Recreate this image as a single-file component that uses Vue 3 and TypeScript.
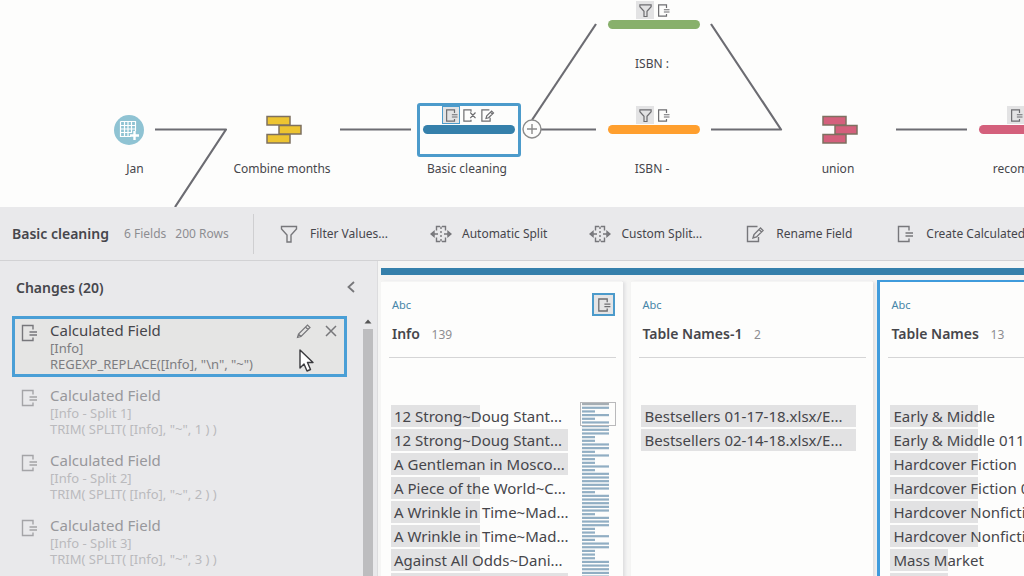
<script setup lang="ts">
import { ref } from 'vue'

type IconName = 'filter' | 'calc' | 'remove' | 'rename' | 'split'
type NodeKind = 'input' | 'union' | 'step'

interface FlowNode {
  id: string
  label: string
  x: number
  y: number
  kind: NodeKind
  color: string
  icons: { name: IconName; shaded: boolean }[]
}

interface Change {
  field: string
  formula: string
}

interface FieldColumn {
  name: string
  count: number
  map: boolean
  values: { text: string; share: number }[]
}

const glyphs: Record<IconName, string> = {
  filter: 'M2.5 2.5H17.5V5L12 11V18H8V11L2.5 5Z',
  calc: 'M14 6.5V2.5H3.5V17.5H14V14.5M10.5 9H18M10.5 12H18',
  remove: 'M12 5V2.5H2.5V17.5H12V15.5M11 6L18 13.5M18 6L11 13.5',
  rename: 'M12.5 2.5H2.5V17.5H13.5V13M8 14L9 10.5L15.5 4L18 6.5L11.5 13ZM14 5.5L16.5 8',
  split: 'M5.500 6.5V2.5H9M11 2.5H14.500V6.5M5.500 13.5V17.5H9M11 17.5H14.500V13.5M10 2.5V5M10 7V9M10 11V13M10 15V17.5M0 10H7M3 7.5L0 10L3 12.5ZM20 10H13M17 7.5L20 10L17 12.5Z',
}

const nodes: FlowNode[] = [
  { id: 'jan', label: 'Jan', x: 137, y: 130, kind: 'input', color: '#8fc3d3', icons: [] },
  { id: 'combine', label: 'Combine months', x: 284, y: 130, kind: 'union', color: '#edc431', icons: [] },
  {
    id: 'clean', label: 'Basic cleaning', x: 469, y: 130, kind: 'step', color: '#3580ab',
    icons: [{ name: 'calc', shaded: true }, { name: 'remove', shaded: false }, { name: 'rename', shaded: false }],
  },
  {
    id: 'isbn-colon', label: 'ISBN :', x: 654, y: 25, kind: 'step', color: '#88b06b',
    icons: [{ name: 'filter', shaded: true }, { name: 'calc', shaded: false }],
  },
  {
    id: 'isbn-dash', label: 'ISBN -', x: 654, y: 130, kind: 'step', color: '#ff9f2e',
    icons: [{ name: 'filter', shaded: true }, { name: 'calc', shaded: false }],
  },
  { id: 'union', label: 'union', x: 840, y: 130, kind: 'union', color: '#d4607c', icons: [] },
  {
    id: 'recombine', label: 'recombine', x: 1025, y: 130, kind: 'step', color: '#d4607c',
    icons: [{ name: 'calc', shaded: true }, { name: 'remove', shaded: false }],
  },
]

const selectedNode = ref('clean')
const selectedChange = ref(0)

const tools: { icon: IconName; label: string }[] = [
  { icon: 'filter', label: 'Filter Values...' },
  { icon: 'split', label: 'Automatic Split' },
  { icon: 'split', label: 'Custom Split...' },
  { icon: 'rename', label: 'Rename Field' },
  { icon: 'calc', label: 'Create Calculated Field...' },
]

const changes: Change[] = [
  { field: '[Info]', formula: 'REGEXP_REPLACE([Info], "\\n", "~")' },
  { field: '[Info - Split 1]', formula: 'TRIM( SPLIT( [Info], "~", 1 ) )' },
  { field: '[Info - Split 2]', formula: 'TRIM( SPLIT( [Info], "~", 2 ) )' },
  { field: '[Info - Split 3]', formula: 'TRIM( SPLIT( [Info], "~", 3 ) )' },
]

const columns: FieldColumn[] = [
  {
    name: 'Info', count: 139, map: true,
    values: [
      { text: '12 Strong~Doug Stant...', share: 50 },
      { text: '12 Strong~Doug Stant...', share: 100 },
      { text: 'A Gentleman in Mosco...', share: 100 },
      { text: 'A Piece of the World~C...', share: 50 },
      { text: 'A Wrinkle in Time~Mad...', share: 50 },
      { text: 'A Wrinkle in Time~Mad...', share: 50 },
      { text: 'Against All Odds~Dani...', share: 50 },
      { text: '', share: 100 },
    ],
  },
  {
    name: 'Table Names-1', count: 2, map: false,
    values: [
      { text: 'Bestsellers 01-17-18.xlsx/E...', share: 100 },
      { text: 'Bestsellers 02-14-18.xlsx/E...', share: 100 },
    ],
  },
  {
    name: 'Table Names', count: 13, map: false,
    values: [
      { text: 'Early & Middle', share: 41 },
      { text: 'Early & Middle 0117', share: 41 },
      { text: 'Hardcover Fiction', share: 41 },
      { text: 'Hardcover Fiction 0117', share: 41 },
      { text: 'Hardcover Nonfiction', share: 41 },
      { text: 'Hardcover Nonfiction 0117', share: 41 },
      { text: 'Mass Market', share: 27 },
      { text: '', share: 27 },
    ],
  },
]
const selectedColumn = ref('Table Names')

const summary = 'FFHFHFFFFHHFFHFHHFHFFFFFHFFFFFHFFFHHFHFFHHHFFFFFFFF'.split('')
</script>

<template>
  <div class="app">
    <section class="canvas" aria-label="Flow">
      <svg class="links" width="1024" height="207" fill="none" stroke="#6c6c72" stroke-width="2.2" stroke-linejoin="round">
        <path d="M155 129.500H226L175 207" />
        <path d="M340 129.500H411" />
        <path d="M532 120L596 24" />
        <path d="M540 129.500H596" />
        <path d="M711 24L781 129.500H711" />
        <path d="M896 129.500H967" />
      </svg>
      <button
        v-for="n in nodes"
        :key="n.id"
        type="button"
        class="node"
        :style="{ left: n.x + 'px', top: n.y + 'px' }"
        @click="selectedNode = n.id"
      >
        <span class="node-box" :class="[n.kind, { selected: selectedNode === n.id }]">
          <template v-if="n.kind === 'step'">
            <span class="badges">
              <span v-for="b in n.icons" :key="b.name" class="badge" :class="{ shaded: b.shaded }">
                <svg width="15" height="15" viewBox="0 0 20 20" fill="none" stroke="currentColor" stroke-width="1.6"><path :d="glyphs[b.name]" /></svg>
              </span>
            </span>
            <span class="bar" :style="{ background: n.color }"></span>
          </template>
          <svg v-else-if="n.kind === 'input'" width="32" height="32" viewBox="0 0 32 32">
            <circle cx="16" cy="16" r="15" :fill="n.color" />
            <path d="M7.500 7.500H22.500V17M18 22.500H7.500V7.500M7.500 11.500H22.500M7.500 15H22.500M7.500 18.500H19M11.500 7.500V22.500M15 7.500V22.500M18.500 7.500V19" fill="none" stroke="#fff" stroke-width="1.2" />
            <path d="M21.500 17V26M17 21.500H26" stroke="#fff" stroke-width="2.4" />
          </svg>
          <svg v-else width="36" height="30" viewBox="0 0 36 30" :fill="n.color" stroke="#7d7060" stroke-width="1.5">
            <path d="M1 1.500H24V10H1ZM1 19.500H24V28H1ZM13 10.500H35V19H13Z" />
          </svg>
        </span>
        <span class="node-label">{{ n.label }}</span>
      </button>
      <button type="button" class="add" aria-label="Add step">
        <svg width="20" height="20" viewBox="0 0 20 20" fill="#fdfdfc" stroke="#8b8b8b" stroke-width="1.4">
          <circle cx="10" cy="10" r="9" /><path d="M10 5V15M5 10H15" />
        </svg>
      </button>
    </section>

    <header class="toolbar">
      <h1>Basic cleaning</h1>
      <p class="counts"><span>6 Fields</span><span>200 Rows</span></p>
      <nav class="tools" aria-label="Field tools">
        <button v-for="t in tools" :key="t.label" type="button" class="tool">
          <svg width="22" height="20" viewBox="-1 0 22 20" fill="none" stroke="currentColor" stroke-width="1.400"><path :d="glyphs[t.icon]" /></svg>
          <span>{{ t.label }}</span>
        </button>
      </nav>
    </header>

    <main class="work">
      <aside class="changes">
        <div class="changes-head">
          <h2>Changes (20)</h2>
          <button type="button" class="icon-button" aria-label="Collapse changes">
            <svg width="12" height="14" viewBox="0 0 12 14" fill="none" stroke="#77777a" stroke-width="1.8"><path d="M9 2L3.500 7L9 12" /></svg>
          </button>
        </div>
        <div class="changes-body">
          <ol class="change-list">
            <li
              v-for="(c, i) in changes"
              :key="c.field"
              class="change"
              :class="{ active: selectedChange === i }"
              @click="selectedChange = i"
            >
              <svg class="change-icon" width="20" height="20" viewBox="0 0 20 20" fill="none" stroke="currentColor" stroke-width="1.400"><path :d="glyphs.calc" /></svg>
              <div class="change-text">
                <h3>Calculated Field</h3>
                <p>{{ c.field }}</p>
                <p>{{ c.formula }}</p>
              </div>
              <div v-if="selectedChange === i" class="change-actions">
                <button type="button" class="icon-button" aria-label="Edit">
                  <svg width="16" height="16" viewBox="0 0 16 16" fill="none" stroke="#77777a" stroke-width="1.2"><path d="M1.500 14.500L2.500 11L11.500 2L14 4.500L5 13.500ZM9.500 4L12 6.500M2.500 11L5 13.500" /></svg>
                </button>
                <button type="button" class="icon-button" aria-label="Remove">
                  <svg width="12" height="12" viewBox="0 0 12 12" fill="none" stroke="#77777a" stroke-width="1.500"><path d="M1 1L11 11M11 1L1 11" /></svg>
                </button>
              </div>
            </li>
          </ol>
          <div class="scroll" aria-hidden="true">
            <svg width="10" height="16" viewBox="0 0 10 16"><path d="M1.500 10.500L5 6.500L8.500 10.500Z" fill="#555" /></svg>
            <span class="thumb"></span>
          </div>
        </div>
      </aside>

      <section class="profile" aria-label="Profile">
        <div class="strip"></div>
        <div class="columns">
          <article
            v-for="c in columns"
            :key="c.name"
            class="column"
            :class="{ current: selectedColumn === c.name }"
            @click="selectedColumn = c.name"
          >
            <div class="column-top">
              <span class="type">Abc</span>
              <span v-if="c.map" class="calc-mark">
                <svg width="16" height="16" viewBox="0 0 20 20" fill="none" stroke="currentColor" stroke-width="1.600"><path :d="glyphs.calc" /></svg>
              </span>
            </div>
            <h2 class="column-name">{{ c.name }} <span>{{ c.count }}</span></h2>
            <div class="column-body">
              <ul class="values">
                <li v-for="(v, i) in c.values" :key="i">
                  <span class="fill" :style="{ width: v.share + '%' }"></span>
                  <span class="value">{{ v.text }}</span>
                </li>
              </ul>
              <svg v-if="c.map" class="map" width="36" height="190" viewBox="0 0 36 190">
                <rect
                  v-for="(s, i) in summary"
                  :key="i"
                  x="2"
                  :y="1 + i * 3.67"
                  :width="s === 'F' ? 27 : 13"
                  height="2.2"
                  :fill="i === 0 ? '#a5adb3' : '#91aec3'"
                />
                <rect x="0.500" y="0.500" width="35" height="23" fill="none" stroke="#b9b9bb" />
              </svg>
            </div>
          </article>
        </div>
      </section>
    </main>

    <svg class="pointer" width="18" height="26" viewBox="0 0 18 26" fill="#fff" stroke="#3a3a3e" stroke-width="1.400" stroke-linejoin="round" aria-hidden="true">
      <path d="M2 2V20L6 16L9 23L12.500 21.500L9.500 14.500H15Z" />
    </svg>
  </div>
</template>

<style>
html,
body {
  margin: 0;
  overflow: hidden;
}
</style>

<style scoped>
.app {
  position: relative;
  display: flex;
  flex-direction: column;
  height: 100vh;
  overflow: hidden;
  background: #fdfdfc;
  color: #46464b;
  font-family: "Noto Sans", "Open Sans", sans-serif;
  font-size: 12px;
}

h1, h2, h3, p, ol, ul {
  margin: 0;
  padding: 0;
  list-style: none;
}

button {
  margin: 0;
  padding: 0;
  border: 0;
  background: none;
  color: inherit;
  font: inherit;
  cursor: pointer;
}

svg {
  display: block;
  flex: none;
}

.canvas {
  position: relative;
  flex: 0 0 207px;
  overflow: hidden;
}

.links {
  position: absolute;
  left: 0;
  top: 0;
}

.node {
  position: absolute;
  display: flex;
  flex-direction: column;
  align-items: center;
  gap: 4px;
  width: 104px;
  margin: -27px 0 0 -52px;
}

.node-box {
  box-sizing: border-box;
  display: flex;
  flex-direction: column;
  width: 104px;
  height: 54px;
  padding: 0 3px;
  border: 3px solid transparent;
  border-radius: 3px;
}

.node-box.selected {
  border-color: #4c9bcb;
}

.node-box.input,
.node-box.union {
  align-items: center;
  justify-content: center;
}

.node-box.input {
  padding-right: 19px;
}

.badges {
  display: flex;
  justify-content: center;
  height: 19px;
}

.badge {
  box-sizing: border-box;
  display: flex;
  align-items: center;
  justify-content: center;
  width: 18px;
  height: 18px;
  color: #6d6d70;
}

.badge.shaded {
  background: #e3e3e4;
}

.selected .badge.shaded {
  border: 1px solid #4c9bcb;
}

.bar {
  height: 9px;
  border-radius: 5px;
}

.node-label {
  padding-right: 4px;
  line-height: 16px;
  white-space: nowrap;
}

.add {
  position: absolute;
  left: 522px;
  top: 119px;
}

.toolbar {
  box-sizing: border-box;
  flex: 0 0 54px;
  display: flex;
  align-items: center;
  padding-left: 12px;
  overflow: hidden;
  background: #e9e9eb;
  border-bottom: 1px solid #d2d2d4;
  white-space: nowrap;
}

.toolbar h1 {
  flex: 0 0 112px;
  font-size: 14px;
  font-weight: 600;
}

.counts {
  flex: 0 0 129px;
  display: flex;
  gap: 9px;
  color: #8d8d91;
}

.tools {
  flex: none;
  display: flex;
  align-items: center;
  gap: 42px;
  height: 40px;
  padding-left: 24px;
  border-left: 1px solid #cfcfd1;
}

.tool {
  flex: none;
  display: flex;
  align-items: center;
  gap: 10px;
}

.tool svg {
  color: #77777b;
}

.work {
  flex: 1;
  display: flex;
  min-height: 0;
}

.changes {
  box-sizing: border-box;
  flex: 0 0 378px;
  display: flex;
  flex-direction: column;
  min-height: 0;
  background: #e9e9eb;
  border-right: 1px solid #dcdcde;
}

.changes-head {
  display: flex;
  align-items: center;
  justify-content: space-between;
  height: 52px;
  padding: 0 20px 0 16px;
}

.changes-head h2 {
  font-size: 14px;
  font-weight: 600;
}

.changes-body {
  flex: 1;
  display: flex;
  justify-content: space-between;
  min-height: 0;
  padding: 0 4px 0 12px;
}

.change-list {
  flex: 1;
  display: flex;
  flex-direction: column;
  gap: 4px;
  margin: 3px 16px 0 0;
  overflow: hidden;
}

.change {
  box-sizing: border-box;
  flex: none;
  display: flex;
  height: 61px;
  padding: 1px 7px 0 4px;
  border: 3px solid transparent;
  color: #a4a4a7;
}

.change.active {
  border-color: #4a9fd6;
  background: #e5e5e4;
  color: #77777b;
}

.change-icon {
  margin: 3px 11px 0 0;
}

.change-text {
  flex: 1;
  line-height: 16px;
}

.change-text p {
  color: #bababd;
  font-size: 13px;
}

.change.active p {
  color: #7d7d81;
}

.change h3 {
  color: #98989c;
  font-size: 15px;
  font-weight: 400;
  line-height: 20px;
}

.change.active h3 {
  color: #46464b;
}

.change-actions {
  display: flex;
  align-items: center;
  gap: 13px;
  height: 22px;
}

.scroll {
  display: flex;
  flex-direction: column;
  width: 10px;
}

.thumb {
  flex: 1;
  background: #bdbdbf;
}

.profile {
  flex: 1;
  min-width: 0;
  display: flex;
  flex-direction: column;
  padding: 7px 0 0 3px;
  background: #f5f5f4;
}

.strip {
  flex: 0 0 7px;
  background: #3580ab;
}

.columns {
  flex: 1;
  display: flex;
  gap: 8px;
  min-height: 0;
  padding-top: 5px;
  overflow: hidden;
}

.column {
  box-sizing: border-box;
  flex: 0 0 242px;
  padding: 0 7px 0 8px;
  border-top: 2px solid transparent;
  background: #fdfdfc;
  background-clip: padding-box;
  box-shadow: 2px 2px 3px #dddddf;
}

.column.current {
  flex-basis: 247px;
  margin-left: -4px;
  border: solid #3f9bdc;
  border-width: 2px 3px 0;
}

.column-top {
  display: flex;
  align-items: center;
  justify-content: space-between;
  height: 45px;
  padding: 0 1px 0 3px;
}

.type {
  color: #4685a8;
  font-size: 11px;
}

.calc-mark {
  box-sizing: border-box;
  display: grid;
  place-items: center;
  width: 23px;
  height: 23px;
  border: 2px solid #4c9bcb;
  background: #e5e5e6;
  color: #6d6d70;
}

.column-name {
  height: 30px;
  padding: 0 3px;
  border-bottom: 1px solid #d5d5d6;
  font-size: 14px;
  font-weight: 600;
  line-height: 14px;
}

.column-name span {
  margin-left: 8px;
  color: #8d8d91;
  font-size: 12px;
  font-weight: 400;
}

.column-body {
  display: flex;
  gap: 12px;
  padding: 44px 10px 0 2px;
}

.values {
  flex: 1;
  display: flex;
  flex-direction: column;
  gap: 2px;
  padding-top: 3px;
}

.values li {
  position: relative;
  height: 22px;
}

.fill {
  position: absolute;
  inset: 0 auto 0 0;
  background: #e2e2e3;
}

.value {
  position: relative;
  padding-left: 3px;
  font-size: 15px;
  line-height: 22px;
  white-space: nowrap;
}

.column:first-child .column-body {
  padding-right: 0;
}

.pointer {
  position: absolute;
  left: 298px;
  top: 348px;
}
</style>
